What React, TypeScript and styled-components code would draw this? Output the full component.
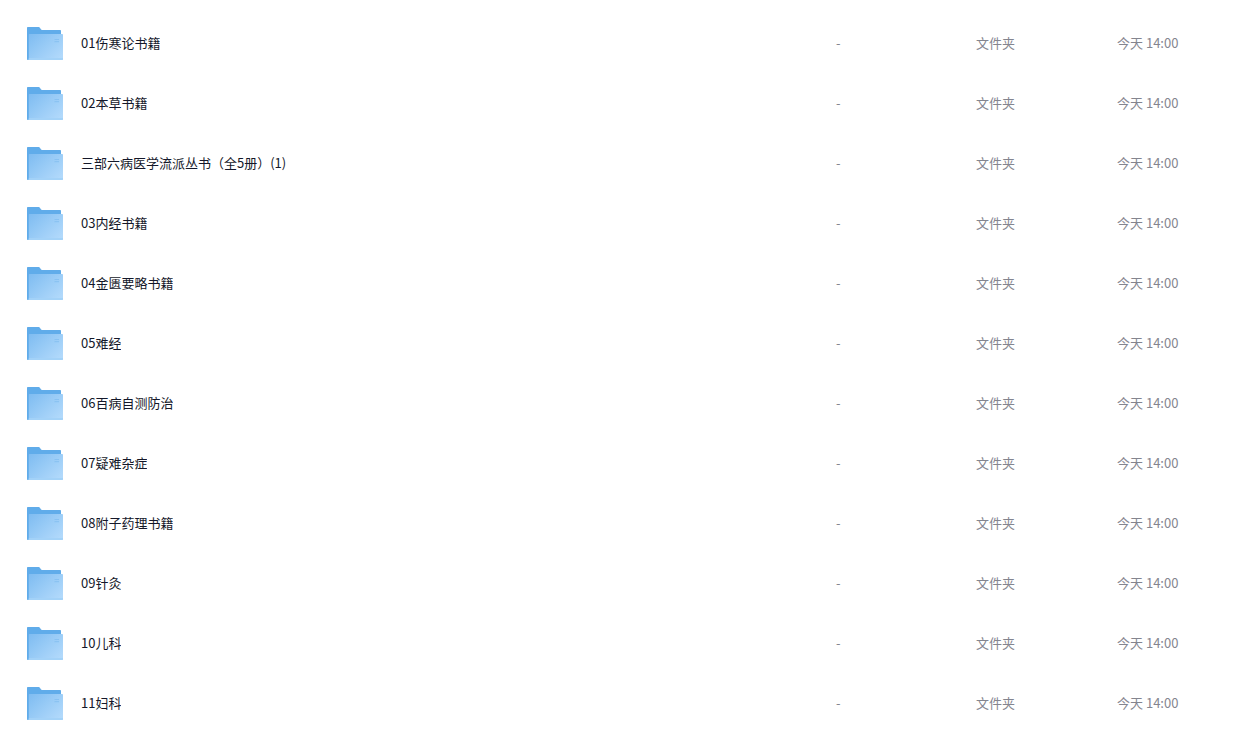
import React from 'react';
import styled, { createGlobalStyle } from 'styled-components';

const GlobalStyle = createGlobalStyle`
  *, *::before, *::after { box-sizing: border-box; }
  body {
    margin: 0;
    background: #fff;
    font-family: "Noto Sans CJK SC", sans-serif;
    font-size: 13px;
    line-height: 20px;
  }
`;

const Page = styled.main`
  padding-top: 13px;
`;

const FileTable = styled.table`
  width: 100%;
  table-layout: fixed;
  border-collapse: collapse;
`;

const Column = styled.col<{ $width?: number }>`
  width: ${({ $width }) => ($width ? `${$width}px` : 'auto')};
`;

const Row = styled.tr`
  height: 60px;
`;

const NameCell = styled.td`
  padding: 0 16px 0 25px;
`;

const NameContent = styled.div`
  display: flex;
  align-items: center;
  gap: 16px;
`;

const FileName = styled.a`
  color: #14182a;
  text-decoration: none;
  white-space: nowrap;
  overflow: hidden;
  text-overflow: ellipsis;
`;

const InfoCell = styled.td`
  padding: 0;
  color: #84858f;
  white-space: nowrap;
`;

const IconBox = styled.svg`
  display: block;
  flex: none;
  width: 40px;
  height: 40px;
`;

const FolderIcon = () => (
  <IconBox viewBox="0 0 40 40" aria-hidden="true">
    <defs>
      <linearGradient id="folderFront" x1="0" y1="0" x2="1" y2="0.8">
        <stop offset="0" stopColor="#7ebcf1" />
        <stop offset="1" stopColor="#b1d9fb" />
      </linearGradient>
    </defs>
    <path
      d="M3 4h10.6c.6 0 1 .3 1.3.8l1 1.5c.3.5.6.7 1.2.7H35c.6 0 1 .4 1 1v28.5L3 37c-.6 0-1-.4-1-1V5c0-.6.4-1 1-1Z"
      fill="#60acea"
    />
    <path d="M4.8 11H37c.6 0 1 .4 1 1v24c0 .6-.4 1-1 1H3.3c.4-.2.5-.5.5-1V12c0-.6.4-1 1-1Z" fill="url(#folderFront)" />
    <path d="M3.8 35H38v1c0 .6-.4 1-1 1H3.3c.4-.2.5-.5.5-1Z" fill="#a3d2f8" />
    <path d="M29.5 16.5h4.5M29.5 18.7h4.5" stroke="#85bff0" strokeWidth=".9" />
  </IconBox>
);

const folders = [
  '01伤寒论书籍',
  '02本草书籍',
  '三部六病医学流派丛书（全5册）(1)',
  '03内经书籍',
  '04金匮要略书籍',
  '05难经',
  '06百病自测防治',
  '07疑难杂症',
  '08附子药理书籍',
  '09针灸',
  '10儿科',
  '11妇科',
];

export default function App() {
  return (
    <>
      <GlobalStyle />
      <Page lang="zh-CN">
        <FileTable>
          <colgroup>
            <Column />
            <Column $width={140} />
            <Column $width={141} />
            <Column $width={139} />
          </colgroup>
          <tbody>
            {folders.map((name) => (
              <Row key={name}>
                <NameCell>
                  <NameContent>
                    <FolderIcon />
                    <FileName href="#">{name}</FileName>
                  </NameContent>
                </NameCell>
                <InfoCell>-</InfoCell>
                <InfoCell>文件夹</InfoCell>
                <InfoCell>今天 14:00</InfoCell>
              </Row>
            ))}
          </tbody>
        </FileTable>
      </Page>
    </>
  );
}
